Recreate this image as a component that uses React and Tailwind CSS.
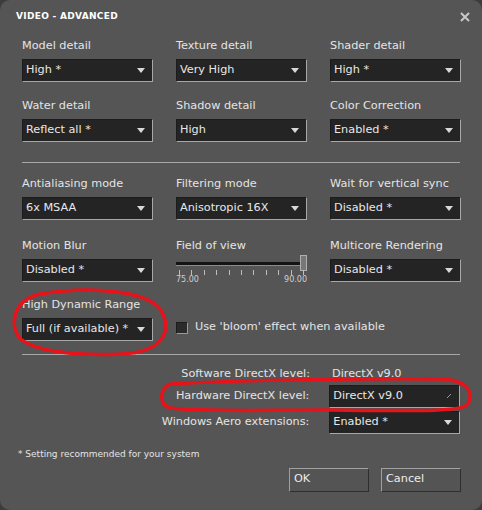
import React from "react";

const font = { fontFamily: '"DejaVu Sans", Verdana, sans-serif' };

function Select({ value, arrow = "down", className = "" }) {
  return (
    <div
      className={`flex h-[23px] w-[131px] items-center justify-between border border-t-[#1c1c1c] border-l-[#1c1c1c] border-r-[#a8a8a8] border-b-[#a8a8a8] bg-[#242424] pl-[3px] pr-[7px] text-[11.25px] text-[#e8e8e8] ${className}`}
    >
      <span className="whitespace-nowrap">{value}</span>
      {arrow === "down" ? (
        <svg width="8" height="5" viewBox="0 0 8 5">
          <path d="M0 0 H8 L4 5 Z" fill="#d8d8d8" />
        </svg>
      ) : (
        <svg width="6" height="6" viewBox="0 0 6 6">
          <path d="M5 1 L1 5" stroke="#9a9a9a" strokeWidth="1" />
        </svg>
      )}
    </div>
  );
}

function Field({ label, value }) {
  return (
    <div className="flex w-[131px] flex-col gap-[5px]">
      <span className="h-[16px] whitespace-nowrap text-[11.25px] leading-[16px] text-[#e4e4e4]">{label}</span>
      <Select value={value} />
    </div>
  );
}

function Slider() {
  const ticks = Array.from({ length: 11 }, (_, i) => i);
  return (
    <div className="flex w-[131px] flex-col gap-[5px]">
      <span className="h-[16px] text-[11.25px] leading-[16px] text-[#e4e4e4]">Field of view</span>
      <div className="relative h-[23px] w-[131px]">
        <div className="absolute left-0 right-[4px] top-[3px] h-[3px] bg-[#141414]" />
        <div className="absolute left-0 right-[4px] top-[6px] h-px bg-[#8a8a8a]" />
        <div className="absolute right-0 top-[-4px] h-[16px] w-[7px] border border-[#b0b0b0] bg-[#777]" />
        <div className="absolute left-[3px] right-[3px] top-[11px] flex justify-between">
          {ticks.map((t) => (
            <div key={t} className="h-[5px] w-px bg-[#bdbdbd]" />
          ))}
        </div>
        <span className="absolute left-0 top-[16px] text-[8px] leading-[9px] text-[#cfcfcf]">75.00</span>
        <span className="absolute right-0 top-[16px] text-[8px] leading-[9px] text-[#cfcfcf]">90.00</span>
      </div>
    </div>
  );
}

function Button({ children }) {
  return (
    <div className="flex h-[24px] w-[80px] items-center border border-t-[#a0a0a0] border-l-[#a0a0a0] border-r-[#2e2e2e] border-b-[#2e2e2e] bg-[#545454] px-[4px] text-[11.25px] text-[#ececec]">
      {children}
    </div>
  );
}

export default function App() {
  return (
    <div className="h-[510px] w-[482px] bg-[#3c3c3c]" style={font}>
      <div className="relative flex h-[510px] w-[482px] flex-col rounded-[10px] bg-[#555555]">
        <div className="flex h-[32px] items-center justify-between pl-[16px] pr-[12px] pt-[1px]">
          <span className="text-[9px] font-bold tracking-[0.3px] text-white">VIDEO - ADVANCED</span>
          <svg width="10" height="10" viewBox="0 0 10 10">
            <path d="M1 1 L9 9 M9 1 L1 9" stroke="#c8c8c8" strokeWidth="2" />
          </svg>
        </div>

        <div className="flex flex-col px-[22px] pt-[6px]">
          <div className="grid grid-cols-[131px_131px_131px] gap-x-[23px] gap-y-[16px]">
            <Field label="Model detail" value="High *" />
            <Field label="Texture detail" value="Very High" />
            <Field label="Shader detail" value="High *" />
            <Field label="Water detail" value="Reflect all *" />
            <Field label="Shadow detail" value="High" />
            <Field label="Color Correction" value="Enabled *" />
          </div>

          <div className="mb-[13px] mt-[20px] h-px w-[438px] bg-[#a8a8a8]" />

          <div className="grid grid-cols-[131px_131px_131px] gap-x-[23px] gap-y-[18px]">
            <Field label="Antialiasing mode" value="6x MSAA" />
            <Field label="Filtering mode" value="Anisotropic 16X" />
            <Field label="Wait for vertical sync" value="Disabled *" />
            <Field label="Motion Blur" value="Disabled *" />
            <Slider />
            <Field label="Multicore Rendering" value="Disabled *" />
            <div className="-mt-[3px]">
              <Field label="High Dynamic Range" value="Full (if available) *" />
            </div>
            <div className="col-span-2 flex items-end pb-[5px]">
              <div className="flex items-center gap-[7px]">
                <div className="h-[12px] w-[12px] border border-t-[#1c1c1c] border-l-[#1c1c1c] border-r-[#9a9a9a] border-b-[#9a9a9a] bg-[#2a2a2a]" />
                <span className="text-[11.25px] text-[#e4e4e4]">Use 'bloom' effect when available</span>
              </div>
            </div>
          </div>

          <div className="mb-[9px] mt-[13px] h-px w-[438px] bg-[#a8a8a8]" />

          <div className="flex flex-col gap-[2px] text-[11.25px] text-[#e4e4e4]">
            <div className="flex h-[20px] items-center">
              <span className="w-[290px] pr-[2px] text-right">Software DirectX level:</span>
              <span className="pl-[20px]">DirectX v9.0</span>
            </div>
            <div className="-mt-[2px] flex h-[24px] items-center">
              <span className="w-[290px] pr-[2px] text-right">Hardware DirectX level:</span>
              <Select value="DirectX v9.0" arrow="edit" className="ml-[18px]" />
            </div>
            <div className="mt-[1px] flex h-[22px] items-center">
              <span className="w-[290px] pr-[2px] text-right">Windows Aero extensions:</span>
              <Select value="Enabled *" className="ml-[18px]" />
            </div>
          </div>
        </div>

        <div className="pl-[18px] pt-[15px] text-[9px] text-[#e4e4e4]">* Setting recommended for your system</div>

        <div className="flex justify-end gap-[12px] pr-[21px] pt-[6px]">
          <Button>OK</Button>
          <Button>Cancel</Button>
        </div>

        {/* red marker loops drawn over the dialog */}
        <svg className="pointer-events-none absolute left-0 top-0" width="482" height="510" viewBox="0 0 482 510">
          <path
            d="M40 294 C90 286 150 290 162 312 C172 332 162 352 122 354 C80 356 30 352 18 336 C10 322 14 300 40 294 Z"
            fill="none"
            stroke="#e8121b"
            strokeWidth="3.5"
            strokeLinecap="round"
          />
          <path
            d="M170 384 C240 380 380 378 440 379 C468 380 474 392 468 404 C462 412 420 411 330 410 C260 410 200 412 170 408 C158 404 160 388 170 384 Z"
            fill="none"
            stroke="#e8121b"
            strokeWidth="3.5"
            strokeLinecap="round"
          />
        </svg>
      </div>
    </div>
  );
}
